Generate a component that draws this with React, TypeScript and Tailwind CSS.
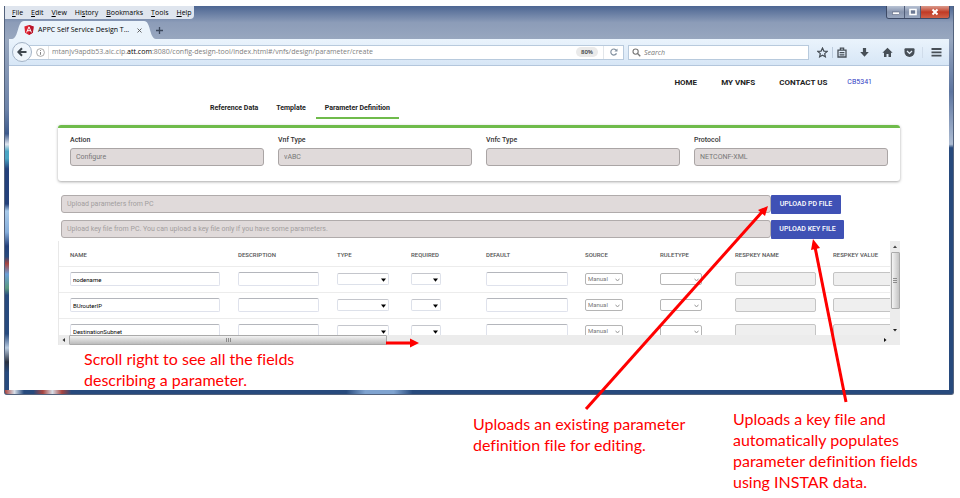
import React from "react";

const parameters = ["nodename", "BUrouterIP", "DestinationSubnet"];

const columns = [
  { title: "NAME", width: "w-[168px]" },
  { title: "DESCRIPTION", width: "w-[99px]" },
  { title: "TYPE", width: "w-[74px]" },
  { title: "REQUIRED", width: "w-[75px]" },
  { title: "DEFAULT", width: "w-[99px]" },
  { title: "SOURCE", width: "w-[75px]" },
  { title: "RULETYPE", width: "w-[75px]" },
  { title: "RESPKEY NAME", width: "w-[98px]" },
  { title: "RESPKEY VALUE", width: "w-[99px]" },
];

const menus = [
  ["", "F", "ile"],
  ["", "E", "dit"],
  ["", "V", "iew"],
  ["Hi", "s", "tory"],
  ["", "B", "ookmarks"],
  ["", "T", "ools"],
  ["", "H", "elp"],
];

const uiFont = "font-['Open_Sans','Noto_Sans',sans-serif]";
const noteFont = "font-[Lato,sans-serif] text-[16px] leading-[21px] whitespace-nowrap text-[#ff0000] [font-variant-ligatures:none]";

function MenuBar() {
  return (
    <div className="flex h-[13px] w-[189px] items-center gap-[8px] rounded-br-sm bg-[#dfe5ee] pl-[7px] text-[7px] leading-none text-black">
      {menus.map(([pre, key, post]) => (
        <button key={key + post} className="whitespace-nowrap">
          {pre}
          <span className="underline">{key}</span>
          {post}
        </button>
      ))}
    </div>
  );
}

function WindowButtons() {
  return (
    <div className="mr-[3px] flex h-[13px] overflow-hidden rounded-b-[3px] border border-t-0 border-[#3d4a66]">
      <button aria-label="Minimize" className="flex w-[17px] items-center justify-center bg-linear-to-b from-[#b9c3d4] via-[#8794ae] to-[#98a6bf]">
        <svg width="8" height="8" viewBox="0 0 8 8"><rect x="0.5" y="4" width="7" height="2.5" fill="#fff" stroke="#4b5570" strokeWidth=".5" /></svg>
      </button>
      <button aria-label="Maximize" className="flex w-[17px] items-center justify-center border-x border-[#4f5c78] bg-linear-to-b from-[#b9c3d4] via-[#8794ae] to-[#98a6bf]">
        <svg width="8" height="8" viewBox="0 0 8 8"><rect x="1" y="1.5" width="6" height="5" fill="#6b7893" stroke="#fff" strokeWidth="1.6" /></svg>
      </button>
      <button aria-label="Close" className="flex w-[28px] items-center justify-center bg-linear-to-b from-[#d99a8c] via-[#c03a25] to-[#cf6048]">
        <svg width="8" height="8" viewBox="0 0 8 8"><path d="M1.5 1.5 6.5 6.5M6.5 1.5 1.5 6.5" stroke="#fff" strokeWidth="2" /></svg>
      </button>
    </div>
  );
}

function TabStrip() {
  return (
    <div className="flex h-[20px] items-end pl-[7px]">
      <svg width="12" height="19" viewBox="0 0 12 19"><path d="M0 19C7 18 5 1 12 1V19Z" fill="#eaf3fb" /></svg>
      <div className="flex h-[18px] items-center bg-[#eaf3fb] text-[7px] text-black">
        <svg width="10" height="10" viewBox="0 0 10 10">
          <path d="M5 0 9.6 1.6 8.9 7.8 5 10 1.1 7.8.4 1.6Z" fill="#dd2231" />
          <path d="M5 0V10L8.9 7.8 9.6 1.6Z" fill="#b8152a" />
          <path d="M2.6 7.4 5 1.8 7.4 7.4M3.6 5.7H6.4" stroke="#fff" strokeWidth="1" fill="none" />
        </svg>
        <span className="ml-[4px] w-[96px] whitespace-nowrap">APPC Self Service Design T...</span>
        <button aria-label="Close tab" className="flex w-[10px] justify-center">
          <svg width="5" height="5" viewBox="0 0 5 5"><path d="M.5 .5 4.5 4.5M4.5 .5 .5 4.5" stroke="#555" strokeWidth=".9" /></svg>
        </button>
      </div>
      <svg width="12" height="19" viewBox="0 0 12 19"><path d="M0 1C7 1 5 18 12 19H0Z" fill="#eaf3fb" /></svg>
      <button aria-label="New tab" className="mb-[5px]">
        <svg width="7" height="7" viewBox="0 0 7 7"><path d="M3.5 0V7M0 3.5H7" stroke="#3c485c" strokeWidth="1.3" /></svg>
      </button>
    </div>
  );
}

function AddressBar() {
  return (
    <div className="flex h-[27px] items-center border-b border-[#b3c6dc] bg-linear-to-b from-[#eaf3fc] to-[#d7e6f6] pr-[7px]">
      <button aria-label="Back" className="z-10 ml-[3px] flex size-[20px] shrink-0 items-center justify-center rounded-full border border-[#a3b3c6] bg-[#eef5fc]">
        <svg width="10" height="10" viewBox="0 0 10 10"><path d="M9.5 5H1.6M5 1.3 1.3 5 5 8.7" stroke="#3f4850" strokeWidth="2" fill="none" /></svg>
      </button>
      <div className="-ml-[4px] flex h-[15px] min-w-0 flex-1 items-center border border-[#b8cadd] bg-white pl-[7px]">
        <svg width="9" height="9" viewBox="0 0 9 9" className="shrink-0"><circle cx="4.5" cy="4.5" r="3.9" fill="none" stroke="#888" strokeWidth=".7" /><path d="M4.5 4V6.8M4.5 2.1V3" stroke="#777" strokeWidth=".9" /></svg>
        <span className="mx-[3px] h-[13px] w-px shrink-0 bg-[#e4e4e4]" />
        <div className="min-w-0 flex-1 overflow-hidden text-[7px] whitespace-nowrap text-[#808080]">
          mtanjv9apdb53.aic.cip.<span className="text-black">att.com</span>:8080/config-design-tool/index.html#/vnfs/design/parameter/create
        </div>
        <button className="h-[10px] w-[22px] rounded-full bg-[#eaeaea] text-[6px] leading-none font-semibold text-[#333]">80%</button>
        <button aria-label="Reload" className="ml-[5px] flex h-full w-[20px] items-center justify-center border-l border-[#e2e6ea]">
          <svg width="8" height="8" viewBox="0 0 8 8"><path d="M6.5 5.4A3 3 0 1 1 6.3 2.3" fill="none" stroke="#8391a0" strokeWidth="1.2" /><path d="M7.5 .4V3.6H4.4Z" fill="#8391a0" /></svg>
        </button>
      </div>
      <label className="ml-[4px] flex h-[15px] w-[181px] shrink-0 items-center border border-[#b8cadd] bg-white pl-[3px]">
        <svg width="9" height="9" viewBox="0 0 9 9" className="shrink-0"><circle cx="3.6" cy="3.6" r="2.6" fill="none" stroke="#777" strokeWidth="1.1" /><path d="M5.5 5.5 8.3 8.3" stroke="#777" strokeWidth="1.3" /></svg>
        <input aria-label="Search" placeholder="Search" className="ml-[3px] h-[12px] min-w-0 flex-1 text-[7px] italic outline-none placeholder:text-[#777]" />
      </label>
      <div className="ml-[8px] flex shrink-0 items-center text-[#474f57]">
        <button aria-label="Bookmark" className="pr-[4px]">
          <svg width="11" height="11" viewBox="0 0 11 11"><path d="M5.5 1 6.9 4.1 10.2 4.4 7.7 6.6 8.4 9.8 5.5 8.2 2.6 9.8 3.3 6.6.8 4.4 4.1 4.1Z" fill="none" stroke="currentColor" strokeWidth="1.2" /></svg>
        </button>
        <button aria-label="Bookmarks list" className="border-l border-[#bccbdc] pl-[4px]">
          <svg width="10" height="11" viewBox="0 0 10 11"><path d="M1 3.2H9V10H1ZM3.4 3V1.2H6.6V3M2.6 5.6H7.4M2.6 7.8H7.4" fill="none" stroke="currentColor" strokeWidth="1.3" /></svg>
        </button>
        <button aria-label="Downloads" className="ml-[12px]">
          <svg width="11" height="11" viewBox="0 0 11 11"><path d="M3.9 1H7.1V5H9.8L5.5 9.8 1.2 5H3.9Z" fill="currentColor" /></svg>
        </button>
        <button aria-label="Home" className="ml-[12px]">
          <svg width="11" height="11" viewBox="0 0 11 11"><path d="M5.5 .8 10.6 5.8H9V10H6.5V7H4.5V10H2V5.8H.4Z" fill="currentColor" /></svg>
        </button>
        <button aria-label="Pocket" className="ml-[11px]">
          <svg width="11" height="11" viewBox="0 0 11 11"><path d="M1.5 1.2H9.5Q10.5 1.2 10.5 2.2V5A5 5 0 0 1 .5 5V2.2Q.5 1.2 1.5 1.2Z" fill="currentColor" /><path d="M3 4 5.5 6.4 8 4" fill="none" stroke="#e6f0fa" strokeWidth="1.3" /></svg>
        </button>
        <button aria-label="Menu" className="ml-[7px] border-l border-[#d0dcea] pl-[8px]">
          <svg width="11" height="11" viewBox="0 0 11 11"><path d="M.5 2H10.5M.5 5.3H10.5M.5 8.6H10.5" stroke="currentColor" strokeWidth="1.8" /></svg>
        </button>
      </div>
    </div>
  );
}

function VnfField({ label, value }: { label: string; value: string }) {
  return (
    <label className="flex flex-col gap-[3px] text-[7px] leading-[10px] font-medium text-[#333]">
      {label}
      <input disabled defaultValue={value} className="h-[18px] w-full rounded-[3px] border border-[#aaa5a5] bg-[#e0dada] px-[5px] text-[7px] font-normal text-[#777]" />
    </label>
  );
}

function UploadRow({ hint, action, width }: { hint: string; action: string; width: string }) {
  return (
    <div className="flex items-start">
      <input disabled aria-label={action} placeholder={hint} className="h-[18px] min-w-0 flex-1 rounded-[3px] border border-[#b0abab] bg-[#e0dada] px-[5px] text-[7px] placeholder:text-[#a29e9e]" />
      <div className="flex w-[129px]">
        <button className={`${width} h-[19px] rounded-[1px] bg-[#3f51b5] text-[7px] leading-none font-medium whitespace-nowrap text-white`}>{action}</button>
      </div>
    </div>
  );
}

function Picker({ label, width, value = "", muted = false }: { label: string; width: string; value?: string; muted?: boolean }) {
  return (
    <div className={`relative ${width}`}>
      <select
        aria-label={label}
        disabled={muted}
        defaultValue={value}
        className={`block h-[12px] w-full appearance-none rounded-[2px] border bg-white pl-[2px] font-[Roboto,sans-serif] text-[6px] leading-[10px] opacity-100 ${muted ? "border-[#b5b5b5] text-[#777]" : "border-[#dde1ea] border-t-[#c4c6cc] text-black"}`}
      >
        <option value={value}>{value}</option>
      </select>
      <svg className="pointer-events-none absolute top-[5px] right-[3px]" width="5" height="4" viewBox="0 0 5 4">
        {muted ? <path d="M.5 .7 2.5 3 4.5 .7" fill="none" stroke="#999" strokeWidth="1" /> : <path d="M0 .5H5L2.5 3.7Z" fill="#000" />}
      </svg>
    </div>
  );
}

function TextCell({ label, width, value = "", muted = false }: { label: string; width: string; value?: string; muted?: boolean }) {
  return (
    <input
      aria-label={label}
      disabled={muted}
      defaultValue={value}
      className={`block h-[14px] rounded-[2px] border px-[2px] text-[6px] ${width} ${muted ? "border-[#c4c4c4] bg-[#efefef]" : "border-[#dfe2ec] border-t-[#b4b6bc] bg-white text-black"}`}
    />
  );
}

function ParameterTable() {
  return (
    <div className="border-l border-[#e8e8e8]">
      <div className="flex h-[94px]">
        <div className="min-w-0 flex-1 overflow-hidden">
          <table className="w-[862px] table-fixed border-collapse text-left">
            <thead>
              <tr className="h-[25px] border-b border-[#ececec]">
                {columns.map((c) => (
                  <th key={c.title} className={`${c.width} pt-[4px] pl-[11px] text-[6px] leading-[8px] font-medium whitespace-nowrap text-[#555]`}>{c.title}</th>
                ))}
              </tr>
            </thead>
            <tbody>
              {parameters.map((name) => (
                <tr key={name} className="h-[26px] border-b border-[#ececec] *:p-0 *:pl-[11px]">
                  <td><TextCell label="Name" width="w-[150px]" value={name} /></td>
                  <td><TextCell label="Description" width="w-[81px]" /></td>
                  <td><Picker label="Type" width="w-[52px]" /></td>
                  <td><Picker label="Required" width="w-[30px]" /></td>
                  <td><TextCell label="Default" width="w-[82px]" /></td>
                  <td><Picker label="Source" width="w-[38px]" value="Manual" muted /></td>
                  <td><Picker label="Rule type" width="w-[42px]" muted /></td>
                  <td><TextCell label="Respkey name" width="w-[81px]" muted /></td>
                  <td><TextCell label="Respkey value" width="w-[82px]" muted /></td>
                </tr>
              ))}
            </tbody>
          </table>
        </div>
        <div className="flex w-[10px] flex-col items-center bg-[#ececec]">
          <svg width="4" height="11" viewBox="0 0 4 11"><path d="M0 7 2 4.5 4 7Z" fill="#444" /></svg>
          <div className="flex h-[57px] w-[9px] items-center justify-center rounded-[1px] border border-[#aaa] bg-linear-to-r from-[#f4f4f4] to-[#c4c4c4]">
            <svg width="4" height="5" viewBox="0 0 4 5"><path d="M0 .5H4M0 2.5H4M0 4.5H4" stroke="#777" strokeWidth=".8" /></svg>
          </div>
          <svg className="mt-auto" width="4" height="10" viewBox="0 0 4 10"><path d="M0 4 2 6.5 4 4Z" fill="#222" /></svg>
        </div>
      </div>
      <div className="flex h-[10px] items-center bg-[#ececec]">
        <svg width="10" height="6" viewBox="0 0 10 6"><path d="M6 1 3.5 3 6 5Z" fill="#333" /></svg>
        <div className="flex h-[10px] w-[318px] items-center justify-center rounded-[1px] border border-[#aaa] bg-linear-to-b from-[#f2f2f2] to-[#bcbcbc]">
          <svg width="5" height="4" viewBox="0 0 5 4"><path d="M.5 0V4M2.5 0V4M4.5 0V4" stroke="#777" strokeWidth=".8" /></svg>
        </div>
        <svg className="mr-[10px] ml-auto" width="10" height="6" viewBox="0 0 10 6"><path d="M4 1 6.5 3 4 5Z" fill="#111" /></svg>
      </div>
    </div>
  );
}

function DesignPage() {
  return (
    <main className="bg-white pr-[49px] pl-[49px] font-[Roboto,sans-serif]">
      <nav className="flex items-center justify-end pt-[11px] pr-[28px] text-[8px] leading-[11px] font-bold text-[#222]">
        <a href="#home">HOME</a>
        <a href="#vnfs" className="ml-[24px]">MY VNFS</a>
        <a href="#contact" className="ml-[24px]">CONTACT US</a>
        <a href="#user" className="ml-[20px] text-[7px] font-normal text-[#3140c4]">CB5341</a>
      </nav>
      <nav className="flex pt-[14px] pl-[144px] text-[7px] leading-[12px] font-bold text-[#222]">
        <a href="#reference" className="px-[8px] pb-[3px]">Reference Data</a>
        <a href="#template" className="px-[10px] pb-[3px]">Template</a>
        <a href="#parameters" className="border-b-2 border-[#6fbb4b] px-[9px] pb-[3px]">Parameter Definition</a>
      </nav>
      <section className="mt-[6px] grid grid-cols-4 gap-[14px] rounded-[3px] border-t-[3px] border-[#6fbb4b] px-[12px] pt-[7px] pb-[15px] shadow-[0_1px_3px_rgba(0,0,0,0.35)]">
        <VnfField label="Action" value="Configure" />
        <VnfField label="Vnf Type" value="vABC" />
        <VnfField label="Vnfc Type" value="" />
        <VnfField label="Protocol" value="NETCONF-XML" />
      </section>
      <section className="flex flex-col gap-[6px] pt-[14px] pl-[3px]">
        <UploadRow hint="Upload parameters from PC" action="UPLOAD PD FILE" width="w-[70px]" />
        <UploadRow hint="Upload key file from PC. You can upload a key file only if you have some parameters." action="UPLOAD KEY FILE" width="w-[73px]" />
      </section>
      <div className="pt-[2px]">
        <ParameterTable />
      </div>
      <p className={`pt-[3px] pl-[26px] ${noteFont}`}>
        Scroll right to see all the fields
        <br />
        describing a parameter.
      </p>
    </main>
  );
}

function Arrows() {
  return (
    <svg className="pointer-events-none absolute top-0 left-0 z-20" width="960" height="498" viewBox="0 0 960 498">
      <g stroke="#ff0000" strokeWidth="3" fill="#ff0000">
        <path d="M586 409 762 212" />
        <path d="M768 206 765 216 758 210Z" stroke="none" />
        <path d="M846 402 815 247" />
        <path d="M813 239 820 248 811 250Z" stroke="none" />
        <path d="M386 343H411" />
        <path d="M419 343 410 347.500V338.500Z" stroke="none" />
      </g>
    </svg>
  );
}

export default function App() {
  return (
    <div className="relative min-h-screen bg-white pt-[6px] pr-[6px] pl-[4px]">
      <div className={`overflow-hidden rounded-b-[3px] border border-t-0 border-[#53627c] bg-[#274a7d] ${uiFont}`}>
        <header className="bg-linear-to-b from-[#4d6692] via-[#8c9cb8] to-[#98a7bf]">
          <div className="flex justify-between">
            <MenuBar />
            <WindowButtons />
          </div>
          <TabStrip />
        </header>
        <div className="flex">
          <div className="w-[4px] bg-[linear-gradient(to_bottom,#98a7bf,#6d83a8_20%,#3d5a8c_27%,#dfe5ee_30%,#4aa5c4_32%,#4aa5c4_34%,#23407a_37%,#23407a_47%,#a9cbea_49%,#86aedb_55%,#23407a_59%,#274a7d_62%,#a9443f_64%,#6ba0d8_67%,#5b9a80_71%,#274a7d_73%,#274a7d_84%,#b9cbe0_88%,#2a3140_92%,#274a7d_95%)]" />
          <div className="min-w-0 flex-1">
            <AddressBar />
            <DesignPage />
          </div>
          <div className="w-[4px] bg-[linear-gradient(to_bottom,#98a7bf,#5d75a0_15%,#aebdd3_30%,#274a7d_31%)]" />
        </div>
        <div className="h-[4px] bg-[linear-gradient(to_right,#a9443f,#d8dfe8_1%,#274a7d_2%,#274a7d_3%,#a9443f_4%,#d8dfe8_5%,#a9443f_6%,#274a7d_7%,#274a7d_36%,#7fa3d0_38%,#7fa3d0_41%,#274a7d_43%)]" />
      </div>
      <div className={`flex justify-end gap-[40px] pt-[13px] ${noteFont}`}>
        <p className="w-[220px] pt-[5px]">
          Uploads an existing parameter
          <br />
          definition file for editing.
        </p>
        <p className="w-[221px]">
          Uploads a key file and
          <br />
          automatically populates
          <br />
          parameter definition fields
          <br />
          using INSTAR data.
        </p>
      </div>
      <Arrows />
    </div>
  );
}
